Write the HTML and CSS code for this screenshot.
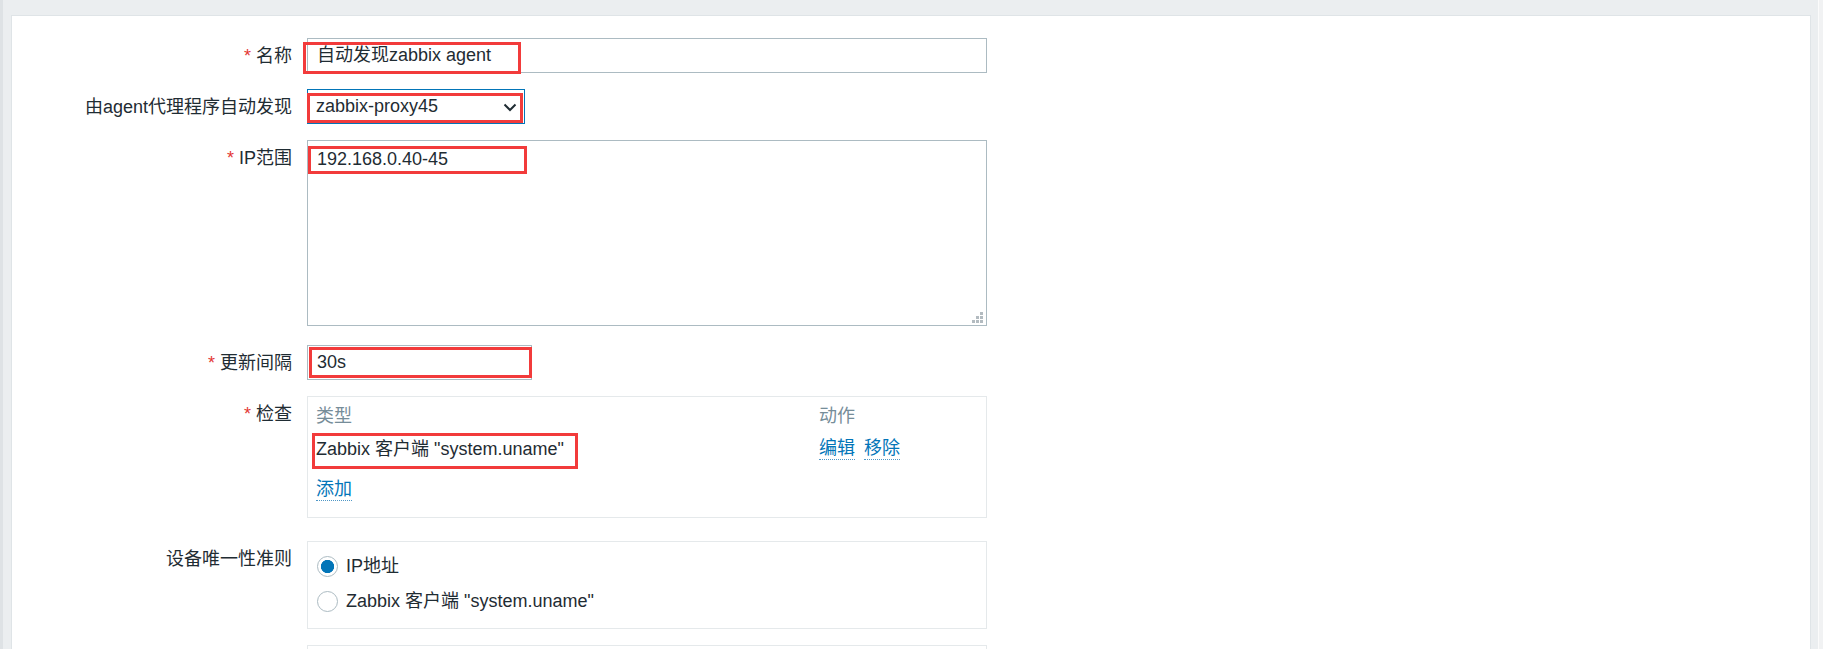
FILE: index.html
```html
<!DOCTYPE html>
<html lang="zh-CN">
<head>
<meta charset="utf-8">
<title>自动发现</title>
<link rel="stylesheet" href="styles.css">
</head>
<body>
<div class="main">
  <div class="panel">
    <div class="row row-name">
      <div class="label"><span class="req">*</span>名称</div>
      <div class="field">
        <div class="input input-wide">自动发现zabbix agent</div>
        <div class="mark mark-name"></div>
      </div>
    </div>

    <div class="row row-proxy">
      <div class="label">由agent代理程序自动发现</div>
      <div class="field">
        <div class="select">
          <span>zabbix-proxy45</span>
          <svg class="chev" width="14" height="9" viewBox="0 0 14 9"><path d="M1.5 1.5 L7 7 L12.5 1.5" fill="none" stroke="#1f2c33" stroke-width="2"/></svg>
        </div>
        <div class="mark mark-proxy"></div>
      </div>
    </div>

    <div class="row row-ip">
      <div class="label"><span class="req">*</span>IP范围</div>
      <div class="field">
        <div class="textarea">192.168.0.40-45</div>
        <svg class="grip" width="12" height="12" viewBox="0 0 12 12">
          <rect x="8" y="0" width="3" height="3"/>
          <rect x="4" y="4" width="3" height="3"/>
          <rect x="8" y="4" width="3" height="3"/>
          <rect x="0" y="8" width="3" height="3"/>
          <rect x="4" y="8" width="3" height="3"/>
          <rect x="8" y="8" width="3" height="3"/>
        </svg>
        <div class="mark mark-ip"></div>
      </div>
    </div>

    <div class="row row-delay">
      <div class="label"><span class="req">*</span>更新间隔</div>
      <div class="field">
        <div class="input input-delay">30s</div>
        <div class="mark mark-delay"></div>
      </div>
    </div>

    <div class="row row-checks">
      <div class="label"><span class="req">*</span>检查</div>
      <div class="field">
        <div class="box checks">
          <div class="checks-head">
            <span>类型</span>
            <span>动作</span>
          </div>
          <div class="checks-row">
            <span>Zabbix 客户端 "system.uname"</span>
            <span class="actions"><a class="link">编辑</a><a class="link">移除</a></span>
          </div>
          <div class="checks-add"><a class="link">添加</a></div>
        </div>
        <div class="mark mark-check"></div>
      </div>
    </div>

    <div class="row row-uniq">
      <div class="label">设备唯一性准则</div>
      <div class="field">
        <div class="box radios">
          <div class="radio-item"><span class="radio on"></span><span>IP地址</span></div>
          <div class="radio-item"><span class="radio"></span><span>Zabbix 客户端 "system.uname"</span></div>
        </div>
      </div>
    </div>

    <div class="row row-next">
      <div class="label"></div>
      <div class="field">
        <div class="box next-box"></div>
      </div>
    </div>
  </div>
</div>
<div class="scrollbar"></div>
</body>
</html>
```
FILE: styles.css
```css
html, body {
  margin: 0;
  padding: 0;
}
body {
  width: 1823px;
  height: 649px;
  overflow: hidden;
  display: flex;
  background: #ebeef0;
  font-family: "Liberation Sans", Arial, "Noto Sans CJK SC", sans-serif;
  font-size: 18px;
  color: #1f2c33;
}
.main {
  flex: 1;
  height: 649px;
  overflow: hidden;
  padding: 15px 7px 0 8px;
  border-left: 3px solid #dee2e5;
  min-width: 0;
  box-sizing: border-box;
}
.scrollbar {
  width: 4px;
  background: #f1f2f3;
  border-left: 1px solid #fbfbfb;
}
.panel {
  background: #ffffff;
  border: 1px solid #dfe4e7;
  border-bottom: 0;
  height: 660px;
  overflow: hidden;
  padding-top: 22px;
  box-sizing: border-box;
}
.row {
  display: grid;
  grid-template-columns: 280px 680px;
  column-gap: 15px;
  margin-bottom: 16px;
}
.row-name { margin-bottom: 16px; }
.row-ip { margin-bottom: 19px; }
.row-checks { margin-bottom: 23px; }
.label {
  text-align: right;
  line-height: 24px;
  padding-top: 6px;
  white-space: nowrap;
}
.req {
  color: #e33734;
  margin-right: 5px;
}
.field {
  position: relative;
}
.input {
  box-sizing: border-box;
  height: 35px;
  border: 1px solid #acbbc2;
  padding: 0 9px;
  line-height: 33px;
  white-space: nowrap;
}
.input-wide { width: 680px; }
.input-delay { width: 225px; }
.select {
  box-sizing: border-box;
  width: 218px;
  height: 35px;
  border: 1px solid #0275b8;
  padding: 0 7px 0 8px;
  display: flex;
  align-items: center;
  justify-content: space-between;
  line-height: 33px;
}
.chev { display: block; margin-top: 1px; }
.textarea {
  box-sizing: border-box;
  width: 680px;
  height: 186px;
  border: 1px solid #acbbc2;
  padding: 6px 9px;
  line-height: 24px;
}
.grip {
  position: absolute;
  right: 3px;
  bottom: 2px;
  fill: #b3bbc0;
}
.box {
  box-sizing: border-box;
  width: 680px;
  border: 1px solid #e5e9eb;
}
.checks {
  padding: 7px 8px 16px;
}
.checks-head,
.checks-row {
  display: grid;
  grid-template-columns: 503px 1fr;
  line-height: 24px;
  height: 24px;
}
.checks-head {
  color: #768d99;
  margin-bottom: 9px;
}
.checks-row {
  margin-bottom: 16px;
  white-space: nowrap;
}
.checks-add {
  line-height: 24px;
  height: 24px;
}
.actions {
  display: flex;
  gap: 9px;
}
.link {
  color: #0275b8;
  border-bottom: 1px dotted #4f97c6;
  line-height: 20px;
  display: inline-block;
  height: 21px;
  margin-top: 1px;
  cursor: pointer;
}
.radios {
  padding: 12px 8px 15px 9px;
}
.radio-item {
  display: flex;
  align-items: center;
  gap: 8px;
  height: 24px;
  line-height: 24px;
  white-space: nowrap;
}
.radio-item + .radio-item {
  margin-top: 11px;
}
.radio {
  box-sizing: border-box;
  width: 21px;
  height: 21px;
  border-radius: 50%;
  border: 1px solid #acbbc2;
  background: #fff;
  flex: none;
}
.radio.on {
  background: radial-gradient(circle, #0275b8 0, #0275b8 6.3px, #ffffff 6.9px);
}
.next-box {
  height: 60px;
}
.mark {
  position: absolute;
  box-sizing: border-box;
  border: 3px solid #f23b3b;
}
.mark-name { left: -4px; top: 4px; width: 218px; height: 32px; }
.mark-proxy { left: 0; top: 4px; width: 216px; height: 30px; }
.mark-ip { left: 1px; top: 6px; width: 219px; height: 28px; }
.mark-delay { left: 2px; top: 2px; width: 223px; height: 31px; }
.mark-check { left: 5px; top: 37px; width: 266px; height: 36px; }
```
